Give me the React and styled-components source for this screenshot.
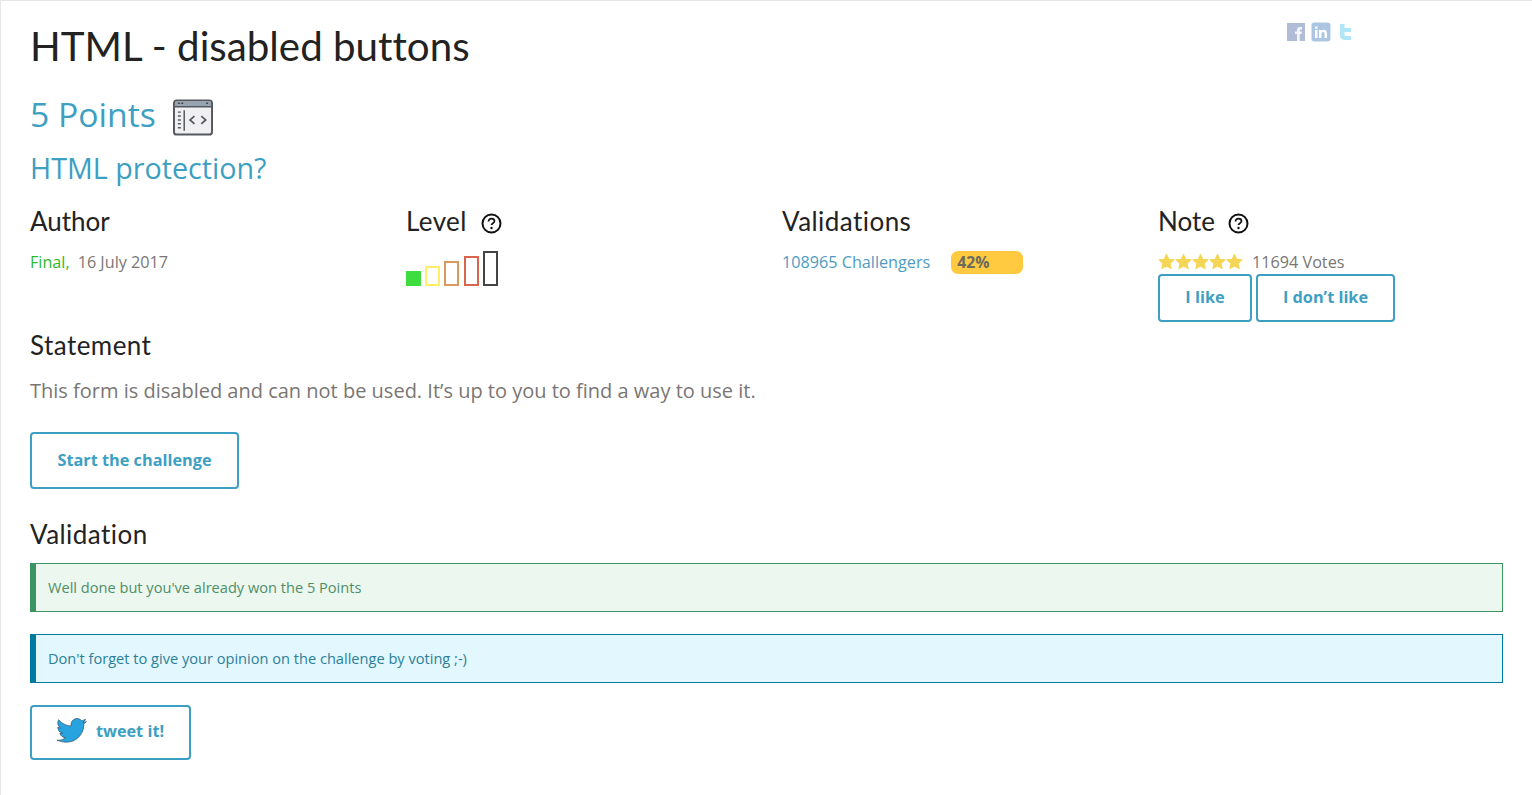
import React from "react";
import styled, { createGlobalStyle } from "styled-components";

const Global = createGlobalStyle`
  html, body { margin: 0; padding: 0; background: #fff; }
  body { font-family: "Open Sans", "Liberation Sans", sans-serif; color: #7a7674; }
  * { box-sizing: border-box; }
`;
const HEAD = `"Lato", "Noto Sans", sans-serif`;
const BLUE = "#3d9fc2";

const Page = styled.main`
  height: 795px; overflow: hidden; position: relative;
  border-top: 1px solid #e6e6e6; border-left: 1px solid #e6e6e6;
  padding: 0 29px 0 29px;
`;
const Title = styled.h1`
  font: 400 40.3px/50px ${HEAD}; font-variant-ligatures: none; color: #222; margin: 20px 0 0; height: 50px;
`;
const Social = styled.div`
  position: absolute; left: 1285px; top: 21px; display: flex; gap: 5px; opacity: .9; filter: blur(.4px);
`;
const Points = styled.div`
  display: flex; align-items: center; gap: 17px; margin-top: 22px; height: 42px;
  font: 400 33.7px/42px "Open Sans", sans-serif; color: ${BLUE};
`;
const PointsIcon = styled.span`display: block; height: 37px; margin-top: 6px;`;
const Subtitle = styled.h2`
  font: 400 28.7px/40px "Open Sans", sans-serif; color: ${BLUE}; margin: 13px 0 0; height: 40px;
`;
const Info = styled.div`
  display: grid; grid-template-columns: repeat(4, 376px); margin-top: 18px; height: 115px;
`;
const Col = styled.div`display: flex; flex-direction: column;`;
const ColHead = styled.div`
  display: flex; align-items: center; gap: ${p => p.$gap || 0}px; height: 32px; margin-top: -1px; margin-bottom: 1px;
  font: 400 26px/32px ${HEAD}; font-variant-ligatures: none; color: #222;
  letter-spacing: ${p => p.$ls || 0}px;
`;
const Value = styled.div`
  display: flex; align-items: center; height: 22px; margin-top: 13px; font-size: 16.2px; color: #7a7674;
`;
const Green = styled.span`color: #2eb82e; margin-right: 8px;`;
const Bars = styled.div`display: flex; align-items: flex-end; gap: 4.2px; margin-top: 12px; height: 36px;`;
const Bar = styled.span`
  display: block; width: 15px; height: ${p => p.$h}px; border: 2px solid ${p => p.$c};
  background: ${p => (p.$fill ? p.$c : "transparent")};
`;
const ChallLink = styled.span`color: #4f9bbf;`;
const Pct = styled.span`
  display: block; width: 72px; height: 23px; margin-left: 21px; border-radius: 7px; background: #ffca3f;
  padding-left: 6px; font-weight: 700; font-size: 15.8px; line-height: 23px; color: #6d6a5e;
`;
const Stars = styled.span`display: flex; margin-right: 9px; margin-top: -2px;`;
const VoteRow = styled.div`display: flex; gap: 4px; margin-top: 1px;`;
const Btn = styled.button`
  display: flex; align-items: center; justify-content: center; background: #fff;
  border: 2px solid ${BLUE}; border-radius: 4px; color: ${BLUE}; font: 700 16.3px "Open Sans", sans-serif;
  padding: 0 0 ${p => p.$pb ?? 2}px; width: ${p => p.$w}px; height: ${p => p.$h}px; gap: ${p => p.$gap || 0}px;
  margin-top: ${p => p.$m || 0}px;
`;
const Section = styled.h3`
  font: 400 26px/32px ${HEAD}; font-variant-ligatures: none; letter-spacing: .45px; color: #222;
  margin: ${p => p.$m}px 0 0; height: 32px;
`;
const Statement = styled.p`
  font-size: 20px; line-height: 28px; margin: 16px 0 27px; color: #7a7674; height: 28px;
`;
const Alert = styled.div`
  width: 1473px; height: 49px; margin-top: ${p => p.$m}px; display: flex; align-items: center;
  padding: 0 0 2px 12px; font-size: 14.6px;
  border: 1px solid ${p => p.$c}; border-left: 6px solid ${p => p.$c};
  background: ${p => p.$bg}; color: ${p => p.$text};
`;

const Help = () => (
  <svg width="21" height="21" viewBox="0 0 21 21" style={{ marginTop: 4 }}>
    <circle cx="10.5" cy="10.5" r="9" fill="none" stroke="#111" strokeWidth="2" />
    <path d="M7.5 8.400c0-1.700 1.300-2.800 3-2.800s3 1 3 2.500c0 2.100-3 2.100-3 4" fill="none" stroke="#111" strokeWidth="1.700" />
    <circle cx="10.5" cy="15" r="1.200" fill="#111" />
  </svg>
);
const Star = () => (
  <svg width="17" height="17" viewBox="0 0 24 24"><path fill="#f5d556" stroke="#f5d556" strokeWidth="1.500" strokeLinejoin="round" d="M12 2l3.100 6.800 7.400.9-5.500 5 1.500 7.300L12 18.400 5.500 22l1.500-7.300-5.500-5 7.400-.9z" /></svg>
);
const CodeIcon = () => (
  <svg width="40" height="37" viewBox="0 0 41 37">
    <rect x="1" y="1" width="39" height="35" rx="3" fill="#f0f0f2" stroke="#55585e" strokeWidth="2" />
    <path d="M2 2h37v5H2z" fill="#98a4b2" />
    <path d="M2 7.500h37" stroke="#55585e" strokeWidth="1.500" />
    <path d="M5 4h2M8.500 4h2M34 4h2" stroke="#444" strokeWidth="1.500" />
    <path d="M11.500 11v21" stroke="#55585e" strokeWidth="1.500" />
    <path d="M5 13h3M5 17h3M5 21h3M5 25h3M5 29h3" stroke="#55585e" strokeWidth="1.500" />
    <path d="M22 17l-4.500 4 4.500 4M29 17l4.500 4-4.500 4" fill="none" stroke="#55585e" strokeWidth="1.800" />
  </svg>
);
const SocialIcons = () => (
  <>
    <svg width="20" height="20" viewBox="0 0 20 20">
      <rect x="1" y="1" width="18" height="18" fill="#a9b5d4" />
      <path d="M11 19v-7H9V9.500h2V8c0-2 1.200-3 3-3h2v2.500h-1.200c-.8 0-1 .4-1 1V9.500H16l-.4 2.500h-1.800v7z" fill="#f2f4fa" />
    </svg>
    <svg width="20" height="20" viewBox="0 0 20 20">
      <rect x="0.500" y="0.500" width="19" height="19" rx="3" fill="#a3bfe0" />
      <path d="M4 8h2.500v8H4zM4 4.500h2.500v2.200H4zM8 8h2.300v1.200c.5-.9 1.400-1.400 2.500-1.400 2 0 3.200 1.200 3.200 3.500V16h-2.500v-4.200c0-1.100-.5-1.800-1.400-1.800-1 0-1.600.7-1.600 1.800V16H8z" fill="#fff" />
    </svg>
    <svg width="20" height="20" viewBox="0 0 20 20">
      <path d="M4 2h4.500v4H15v4H8.500v2.500c0 1 .6 1.500 1.500 1.500h5v4H9c-3 0-5-1.600-5-4.500z" fill="#a8e4f8" />
    </svg>
  </>
);
const TwitterBird = () => (
  <svg width="30" height="26" viewBox="0 0 24 20">
    <path fill="#27a3e0" stroke="#1a2530" strokeWidth=".4" d="M23.500 2.400c-.9.400-1.800.7-2.800.8 1-.6 1.800-1.500 2.100-2.700-.9.600-2 1-3.100 1.200C18.800.7 17.500 0 16.100 0c-2.700 0-4.900 2.200-4.900 4.900 0 .4 0 .8.100 1.100C7.300 5.800 3.700 3.900 1.300.9c-.4.700-.7 1.600-.7 2.500 0 1.700.9 3.200 2.200 4.100-.8 0-1.600-.2-2.200-.6v.1c0 2.400 1.700 4.400 3.900 4.800-.4.100-.8.200-1.300.2-.3 0-.6 0-.9-.1.600 2 2.400 3.400 4.600 3.400-1.700 1.300-3.800 2.100-6.100 2.100-.4 0-.8 0-1.200-.1C2.200 18.200 4.800 19 7.500 19c9 0 14-7.500 14-14v-.6c1-.7 1.800-1.500 2-2z" />
  </svg>
);

export default function App() {
  return (
    <Page>
      <Global />
      <Title>HTML - disabled buttons</Title>
      <Social><SocialIcons /></Social>
      <Points>5 Points <PointsIcon><CodeIcon /></PointsIcon></Points>
      <Subtitle>HTML protection?</Subtitle>
      <Info>
        <Col>
          <ColHead>Author</ColHead>
          <Value><Green>Final,</Green> 16 July 2017</Value>
        </Col>
        <Col>
          <ColHead $gap={14} $ls={.4}>Level <Help /></ColHead>
          <Bars>
            <Bar $h={15} $c="#3fdc3f" $fill />
            <Bar $h={20} $c="#fff066" />
            <Bar $h={25} $c="#d99a5c" />
            <Bar $h={30} $c="#d9654f" />
            <Bar $h={35} $c="#444" />
          </Bars>
        </Col>
        <Col>
          <ColHead $ls={.45}>Validations</ColHead>
          <Value><ChallLink>108965 Challengers</ChallLink><Pct>42%</Pct></Value>
        </Col>
        <Col>
          <ColHead $gap={13}>Note <Help /></ColHead>
          <Value><Stars><Star /><Star /><Star /><Star /><Star /></Stars>11694 Votes</Value>
          <VoteRow>
            <Btn $w={94} $h={48}>I like</Btn>
            <Btn $w={139} $h={48}>I don’t like</Btn>
          </VoteRow>
        </Col>
      </Info>
      <Section $m={8}>Statement</Section>
      <Statement>This form is disabled and can not be used. It’s up to you to find a way to use it.</Statement>
      <Btn $w={209} $h={57}>Start the challenge</Btn>
      <Section $m={29}>Validation</Section>
      <Alert $m={13} $c="#3c9463" $bg="#ecf7ef" $text="#4f8f68">Well done but you've already won the 5 Points</Alert>
      <Alert $m={22} $c="#007a9e" $bg="#e3f7fe" $text="#2c7f99">Don't forget to give your opinion on the challenge by voting ;-)</Alert>
      <Btn $w={161} $h={55} $gap={9} $m={22} $pb={3}><TwitterBird /> tweet it!</Btn>
    </Page>
  );
}
